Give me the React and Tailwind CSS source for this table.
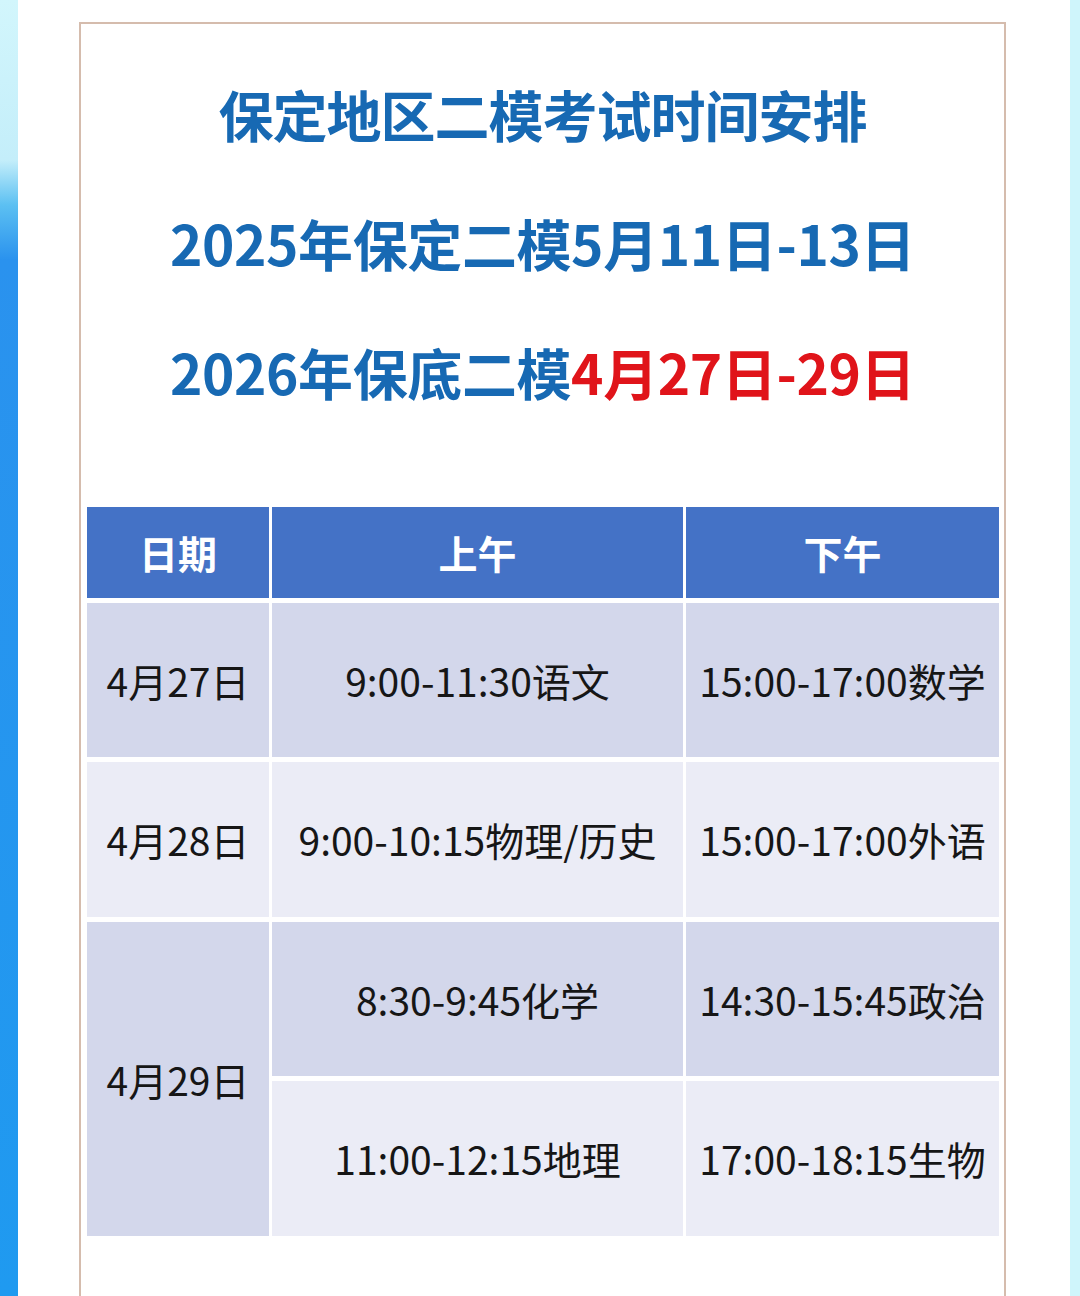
import React from 'react';

const rows = [
  { date: '4月27日', am: '9:00-11:30语文', pm: '15:00-17:00数学', tone: 'dark' },
  { date: '4月28日', am: '9:00-10:15物理/历史', pm: '15:00-17:00外语', tone: 'light' },
];

const cell = 'flex items-center justify-center text-[39px] text-[#161616]';

export default function App() {
  return (
    <div
      className="w-[1080px] h-[1296px] overflow-hidden bg-white flex"
      style={{ fontFamily: '"Noto Sans CJK SC", "Noto Sans", sans-serif' }}
    >
      {/* left backdrop strip */}
      <div className="w-[18px] h-full bg-[linear-gradient(180deg,#d2f6fc_0px,#c4eefa_160px,#5cc0f2_205px,#2a92ee_260px,#1f9af0_1296px)]"></div>

      <div className="flex-1 pl-[61px] pt-[22px]">
        <div className="w-[927px] h-[1300px] border-2 border-b-0 border-[#d5bcad] bg-white px-[6px]">
          <div className="flex flex-col items-center pt-[57px] font-bold text-[#1769b3]">
            <div className="text-[55px] leading-[64px] tracking-[-1px]">保定地区二模考试时间安排</div>
            <div className="text-[55px] leading-[64px] mt-[65px] tracking-[-0.4px]">
              2025年保定二模5月11日-13日
            </div>
            <div className="text-[55px] leading-[64px] mt-[65px] tracking-[-0.4px]">
              2026年保底二模<span className="text-[#e0141a]">4月27日-29日</span>
            </div>
          </div>

          <div className="mt-[104px] grid grid-cols-[182px_411px_313px] grid-rows-[91px_154px_155px_154px_155px] gap-x-[3px] gap-y-[5px]">
            <div className="bg-[#4472c6] flex items-center justify-center text-white font-bold text-[39px]">日期</div>
            <div className="bg-[#4472c6] flex items-center justify-center text-white font-bold text-[39px]">上午</div>
            <div className="bg-[#4472c6] flex items-center justify-center text-white font-bold text-[39px]">下午</div>

            {rows.map((r) => {
              const bg = r.tone === 'dark' ? 'bg-[#d3d7eb]' : 'bg-[#ebecf6]';
              return (
                <React.Fragment key={r.date}>
                  <div className={`${cell} ${bg}`}>{r.date}</div>
                  <div className={`${cell} ${bg}`}>{r.am}</div>
                  <div className={`${cell} ${bg}`}>{r.pm}</div>
                </React.Fragment>
              );
            })}

            <div className={`${cell} bg-[#d3d7eb] row-span-2`}>4月29日</div>
            <div className={`${cell} bg-[#d3d7eb]`}>8:30-9:45化学</div>
            <div className={`${cell} bg-[#d3d7eb]`}>14:30-15:45政治</div>
            <div className={`${cell} bg-[#ebecf6]`}>11:00-12:15地理</div>
            <div className={`${cell} bg-[#ebecf6]`}>17:00-18:15生物</div>
          </div>
        </div>
      </div>

      {/* right backdrop strip */}
      <div className="w-[10px] h-full bg-[#cff5fb]"></div>
    </div>
  );
}
